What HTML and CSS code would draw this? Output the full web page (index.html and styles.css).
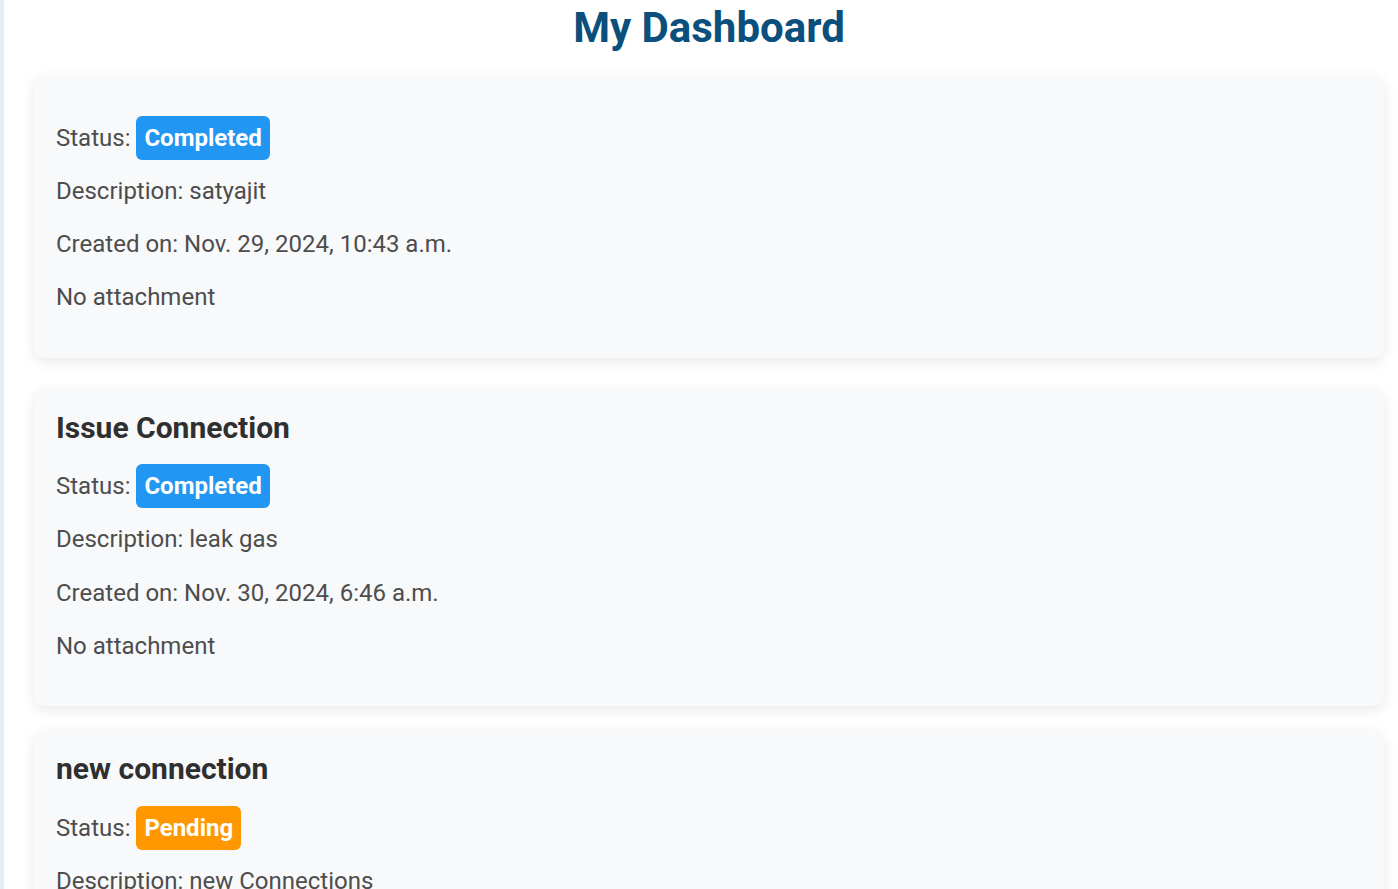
FILE: index.html
```html
<!DOCTYPE html>
<html lang="en">
<head>
<meta charset="utf-8">
<title>My Dashboard</title>
<link rel="stylesheet" href="styles.css">
</head>
<body>
<main class="main">
  <h1 class="page-title">My Dashboard</h1>

  <section class="card card--spaced">
    <h3 class="card-title"></h3>
    <p class="line">Status: <span class="badge badge--completed">Completed</span></p>
    <p class="line">Description: satyajit</p>
    <p class="line">Created on: Nov. 29, 2024, 10:43 a.m.</p>
    <p class="line">No attachment</p>
  </section>

  <section class="card">
    <h3 class="card-title">Issue Connection</h3>
    <p class="line">Status: <span class="badge badge--completed">Completed</span></p>
    <p class="line">Description: leak gas</p>
    <p class="line">Created on: Nov. 30, 2024, 6:46 a.m.</p>
    <p class="line">No attachment</p>
  </section>

  <section class="card">
    <h3 class="card-title">new connection</h3>
    <p class="line">Status: <span class="badge badge--pending">Pending</span></p>
    <p class="line">Description: new Connections</p>
    <p class="line">Created on: Dec. 1, 2024, 9:12 a.m.</p>
    <p class="line">No attachment</p>
  </section>
</main>
</body>
</html>
```
FILE: styles.css
```css
html, body {
  margin: 0;
  padding: 0;
}

body {
  background: #e4ecf4;
  font-family: Roboto, "Liberation Sans", Arial, sans-serif;
  font-size: 24px;
  line-height: 1.22;
  color: #4d4d4d;
}

.main {
  margin-left: 4px;
  min-height: 100vh;
  background: #ffffff;
  padding: 3px 14px 20px 30px;
  box-sizing: border-box;
}

.page-title {
  margin: 0 0 22px;
  font-size: 42px;
  line-height: 50px;
  font-weight: 700;
  text-align: center;
  color: #0b4f7c;
}

.card {
  background: #f8f9fb;
  border-radius: 11px;
  padding: 21px 22px;
  margin-bottom: 24px;
  box-shadow: 0 4px 14px rgba(0, 0, 0, 0.09);
}

.card--spaced {
  margin-bottom: 31px;
}

.card-title {
  margin: 0 0 27.5px;
  font-size: 30px;
  line-height: normal;
  font-weight: 700;
  color: #2f2f2f;
}

.line {
  margin: 24px 0;
}

.card-title + .line {
  margin-top: 0;
}

.badge {
  color: #ffffff;
  font-weight: 700;
  padding: 8px 8px;
  border-radius: 6px;
}

.badge--completed {
  background: #2196f3;
}

.badge--pending {
  background: #ff9800;
}
```
